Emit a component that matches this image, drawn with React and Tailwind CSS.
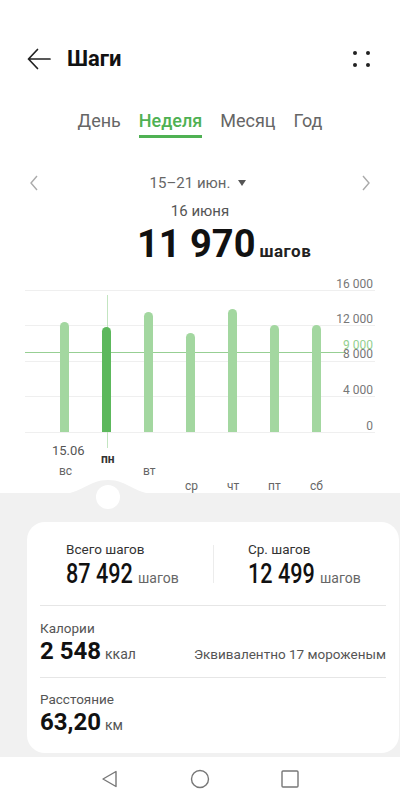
import React from 'react';

const bars = [
  { day: 'вс', h: 110 },
  { day: 'пн', h: 105, active: true },
  { day: 'вт', h: 120 },
  { day: 'ср', h: 99 },
  { day: 'чт', h: 123 },
  { day: 'пт', h: 107 },
  { day: 'сб', h: 107 },
];

const grid = [26, 61, 97, 132, 168];

export default function App() {
  return (
    <div className="w-[400px] h-[800px] bg-white flex flex-col overflow-hidden text-[#222]" style={{ fontFamily: 'Roboto, "Noto Sans", sans-serif' }}>
      <div className="h-9" />

      {/* header */}
      <div className="h-[46px] flex items-center pl-[27px] pr-[30px]">
        <svg width="24" height="24" viewBox="0 0 24 24" fill="none" stroke="#222" strokeWidth="1.7" strokeLinecap="round" strokeLinejoin="round">
          <path d="M23 12H1.5M10.5 2.5L1.5 12l9 9.5" />
        </svg>
        <h1 className="ml-[16px] text-[22px] font-bold leading-none text-[#111]">Шаги</h1>
        <div className="ml-auto grid grid-cols-2 gap-x-[9px] gap-y-[8px]">
          <span className="w-[4px] h-[4px] rounded-full bg-[#222]" />
          <span className="w-[4px] h-[4px] rounded-full bg-[#222]" />
          <span className="w-[4px] h-[4px] rounded-full bg-[#222]" />
          <span className="w-[4px] h-[4px] rounded-full bg-[#222]" />
        </div>
      </div>

      {/* tabs */}
      <div className="mt-[26px] flex justify-center gap-[18px] text-[18px] leading-[26px] text-[#666]">
        <span>День</span>
        <div className="flex flex-col">
          <span className="text-[#4fb153] font-medium">Неделя</span>
          <span className="mt-[1px] h-[3px] bg-[#4fb153]" />
        </div>
        <span>Месяц</span>
        <span>Год</span>
      </div>

      {/* date switch */}
      <div className="mt-[35px] h-[20px] flex items-center justify-between px-[29px] text-[#666]">
        <svg width="10" height="16" viewBox="0 0 10 16" fill="none" stroke="#aaa" strokeWidth="1.4">
          <path d="M8 1L2 8l6 7" />
        </svg>
        <div className="flex items-center gap-[8px] text-[15px] leading-[20px] ml-[-4px]">
          <span>15–21 июн.</span>
          <span className="w-0 h-0 border-l-[4px] border-r-[4px] border-t-[6px] border-l-transparent border-r-transparent border-t-[#555]" />
        </div>
        <svg width="10" height="16" viewBox="0 0 10 16" fill="none" stroke="#aaa" strokeWidth="1.4">
          <path d="M2 1l6 7-6 7" />
        </svg>
      </div>

      <div className="mt-[8px] text-center text-[15px] leading-[20px] text-[#555]">16 июня</div>

      <div className="mt-[3px] h-[40px] flex items-baseline pl-[137px]">
        <span className="text-[38px] leading-[40px] font-bold text-[#111]">11 970</span>
        <span className="ml-[4px] text-[17px] tracking-[0.5px] font-bold text-[#222]">шагов</span>
      </div>

      {/* chart */}
      <div className="relative h-[229px]">
        {grid.map((t) => (
          <div key={t} className="absolute left-[25px] w-[350px] h-px bg-[#efefef]" style={{ top: t }} />
        ))}
        <div className="absolute left-[25px] top-[88px] w-[321px] h-px bg-[#97cf93]" />

        {[
          ['16 000', 13],
          ['12 000', 48],
          ['8 000', 83],
          ['4 000', 119],
          ['0', 155],
        ].map(([t, top]) => (
          <span key={t} className="absolute right-[27px] text-[12px] leading-[14px] text-[#777]" style={{ top }}>{t}</span>
        ))}
        <span className="absolute right-[27px] top-[74px] text-[12px] leading-[14px] text-[#93cf8f]">9 000</span>

        <div className="absolute left-[107px] top-[31px] w-px h-[153px] bg-[#c3e5c1]" />

        <div className="absolute left-[44px] w-[293px] top-0 h-[168px] flex items-end">
          {bars.map((b) => (
            <div key={b.day} className="flex-1 flex justify-center">
              <div
                className={b.active ? 'w-[9px] rounded-t-full bg-[#5cb85c]' : 'w-[9px] rounded-t-full bg-[#a3d7a0]'}
                style={{ height: b.h }}
              />
            </div>
          ))}
        </div>

        <span className="absolute left-[52px] top-[180px] text-[13px] leading-[14px] text-[#555]">15.06</span>
        <span className="absolute left-[101px] top-[188px] text-[12px] leading-[14px] font-bold text-[#333]">пн</span>
        <span className="absolute left-[59px] top-[200px] text-[12px] leading-[14px] text-[#666]">вс</span>
        <span className="absolute left-[143px] top-[200px] text-[12px] leading-[14px] text-[#666]">вт</span>
        <span className="absolute left-[185px] top-[215px] text-[12px] leading-[14px] text-[#666]">ср</span>
        <span className="absolute left-[227px] top-[215px] text-[12px] leading-[14px] text-[#666]">чт</span>
        <span className="absolute left-[268px] top-[215px] text-[12px] leading-[14px] text-[#666]">пт</span>
        <span className="absolute left-[310px] top-[215px] text-[12px] leading-[14px] text-[#666]">сб</span>
      </div>

      {/* summary */}
      <div className="relative h-[264px] bg-[#f1f1f1] pt-[29px] pl-[27px] pr-[1px]">
        <svg className="absolute left-[60px] top-[-14px]" width="96" height="15" viewBox="0 0 96 15">
          <path d="M0 15C22 15 28 1 48 1S74 15 96 15Z" fill="#f1f1f1" />
        </svg>
        <div className="absolute left-[96px] top-[-8px] w-[24px] h-[24px] rounded-full bg-white" />

        <div className="h-[231px] bg-white rounded-[18px] px-[13px]">
          <div className="h-[84px] flex border-b border-[#e6e6e6]">
            <div className="w-[173px] pl-[26px] pt-[18px]">
              <div className="text-[13.5px] leading-[18px] text-[#333]">Всего шагов</div>
              <div className="mt-[1px] h-[30px] flex items-baseline">
                <span className="inline-block origin-left scale-x-[0.8] w-[70px] text-[27px] leading-[30px] font-medium text-[#111] whitespace-nowrap">87 492</span>
                <span className="ml-[2px] text-[14px] text-[#666]">шагов</span>
              </div>
            </div>
            <div className="mt-[23px] w-px h-[38px] bg-[#ececec]" />
            <div className="pl-[34px] pt-[18px]">
              <div className="text-[13.5px] leading-[18px] text-[#333]">Ср. шагов</div>
              <div className="mt-[1px] h-[30px] flex items-baseline">
                <span className="inline-block origin-left scale-x-[0.8] w-[70px] text-[27px] leading-[30px] font-medium text-[#111] whitespace-nowrap">12 499</span>
                <span className="ml-[2px] text-[14px] text-[#666]">шагов</span>
              </div>
            </div>
          </div>

          <div className="h-[72px] border-b border-[#e6e6e6] pt-[13px]">
            <div className="text-[13.5px] leading-[18px] text-[#555]">Калории</div>
            <div className="flex items-baseline h-[28px]">
              <span className="text-[24px] leading-[28px] font-bold text-[#111]">2 548</span>
              <span className="ml-[4px] text-[14px] text-[#555]">ккал</span>
              <span className="ml-auto text-[13.5px] text-[#555]">Эквивалентно 17 мороженым</span>
            </div>
          </div>

          <div className="pt-[12px]">
            <div className="text-[13.5px] leading-[18px] text-[#555]">Расстояние</div>
            <div className="flex items-baseline h-[28px]">
              <span className="text-[24px] leading-[28px] font-bold text-[#111]">63,20</span>
              <span className="ml-[4px] text-[14px] text-[#555]">км</span>
            </div>
          </div>
        </div>
      </div>

      {/* nav bar */}
      <div className="flex-1 bg-white flex items-center justify-center gap-[71px]">
        <svg width="18" height="18" viewBox="0 0 18 18" fill="none" stroke="#777" strokeWidth="1.4" strokeLinejoin="round">
          <path d="M15 1.5v15L2 9z" />
        </svg>
        <svg width="20" height="20" viewBox="0 0 20 20" fill="none" stroke="#777" strokeWidth="1.4">
          <circle cx="10" cy="10" r="8.5" />
        </svg>
        <svg width="18" height="18" viewBox="0 0 18 18" fill="none" stroke="#777" strokeWidth="1.4">
          <rect x="1" y="1" width="16" height="16" rx="1" />
        </svg>
      </div>
    </div>
  );
}
